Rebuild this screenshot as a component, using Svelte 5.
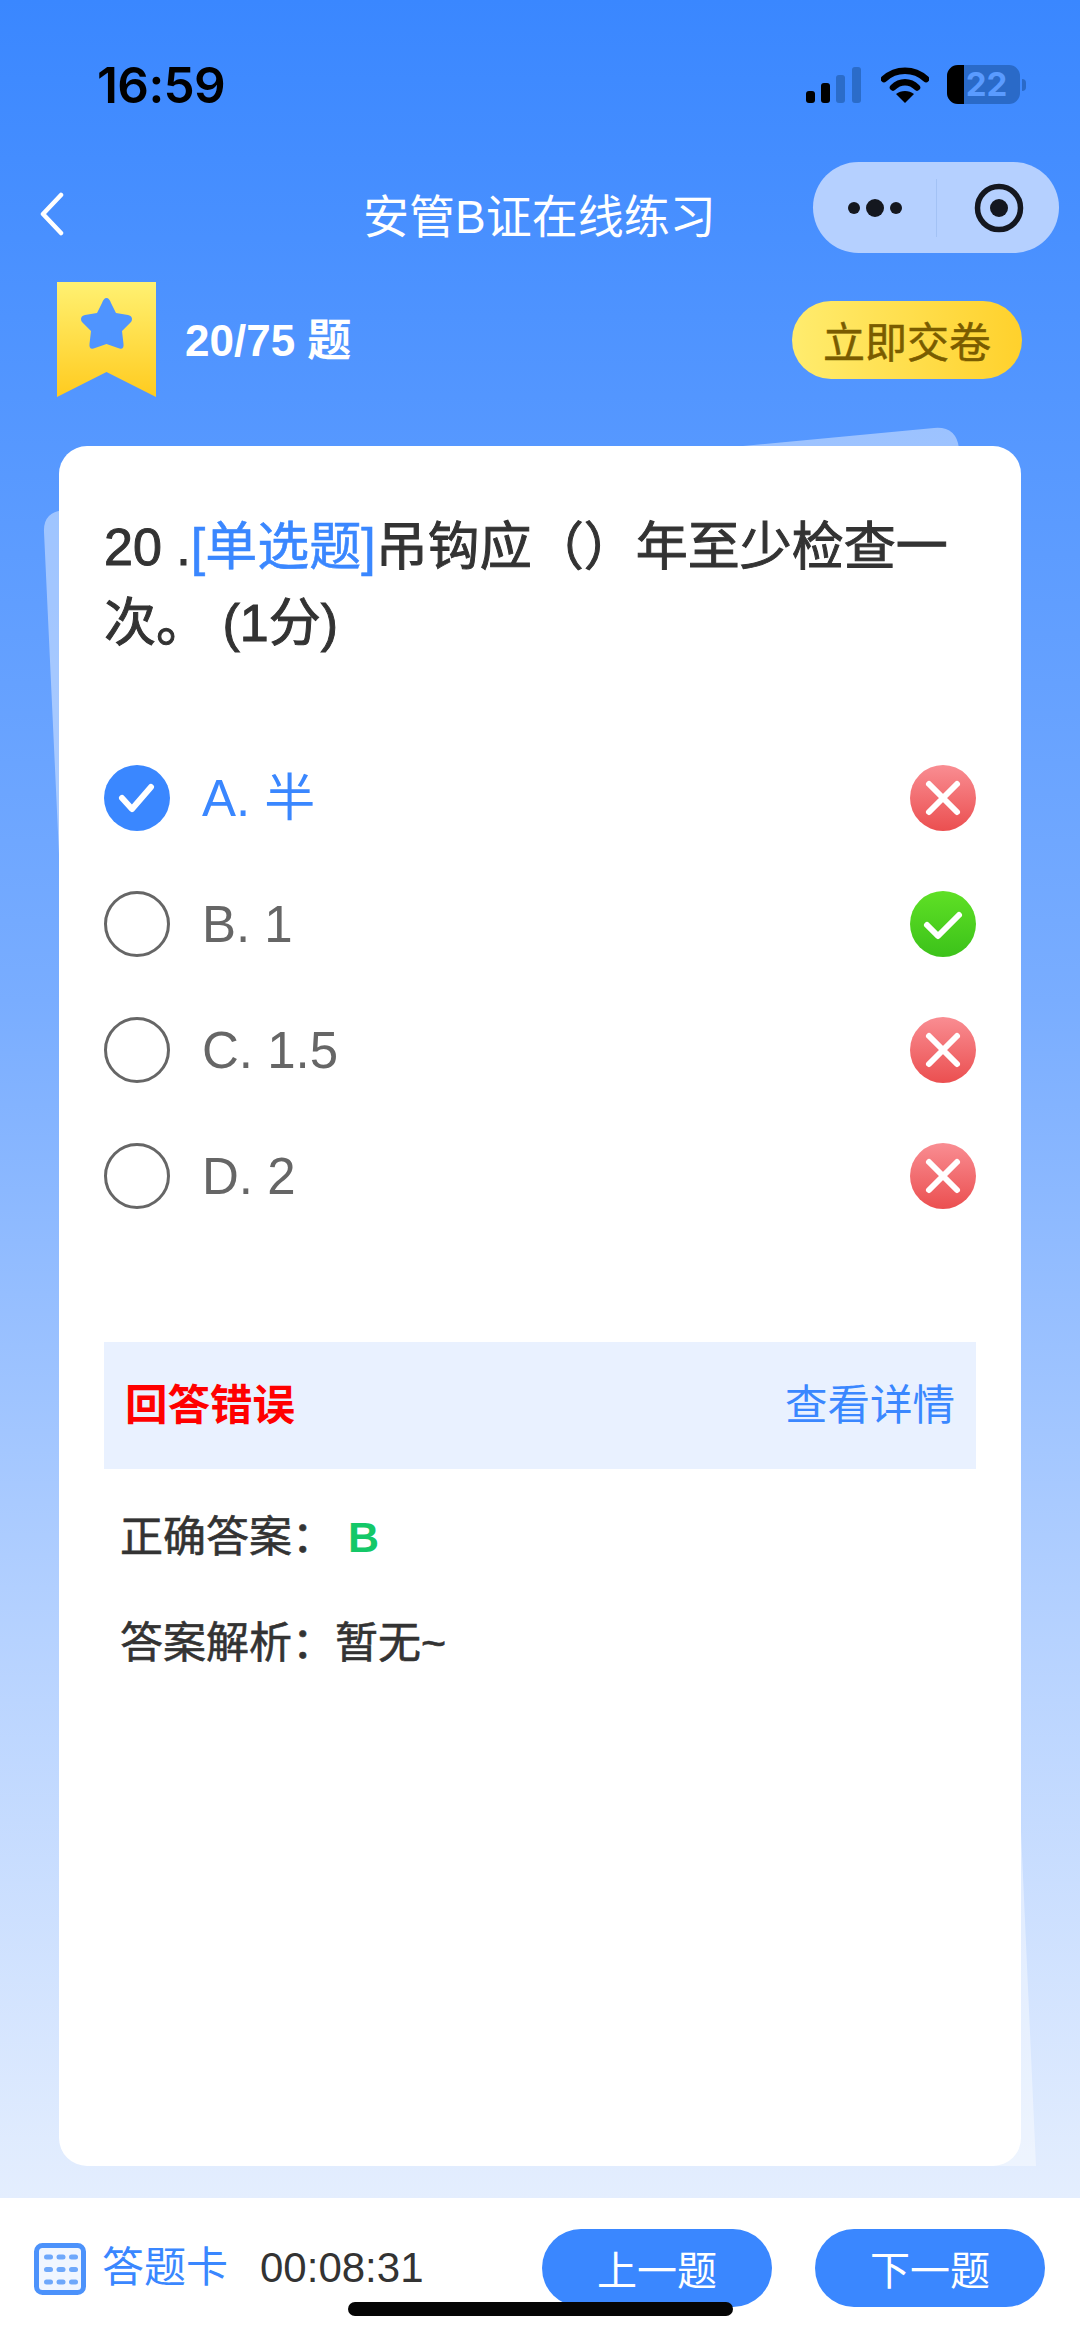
<script>
  const options = [
    { key: 'A', text: '半', picked: true, ok: false },
    { key: 'B', text: '1', picked: false, ok: true },
    { key: 'C', text: '1.5', picked: false, ok: false },
    { key: 'D', text: '2', picked: false, ok: false }
  ];
  const cells = [0, 1, 2];
</script>

<div class="page">
  <!-- tilted sheet peeking out behind the card -->
  <svg class="sheet" width="1080" height="2339" viewBox="0 0 1080 2339" aria-hidden="true">
    <path d="M64 510 L934 428 Q956 426 959 448 L1036 2166 L120 2166 L44 532 Q43 512 64 510 Z" fill="#fff" fill-opacity="0.42" />
  </svg>

  <header class="status">
    <span class="time">16:59</span>
    <div class="status-icons">
      <svg width="56" height="36" viewBox="0 0 56 36">
        <rect x="0" y="24" width="9" height="12" rx="3" fill="#000" />
        <rect x="15" y="16" width="9" height="20" rx="3" fill="#000" />
        <rect x="30" y="8" width="9" height="28" rx="3" fill="#2b6cc9" />
        <rect x="46" y="0" width="9" height="36" rx="3" fill="#2b6cc9" />
      </svg>
      <svg class="wifi" width="48" height="36" viewBox="0 0 48 36">
        <path d="M3 12 C15 1 33 1 45 12" fill="none" stroke="#000" stroke-width="6.5" stroke-linecap="round" />
        <path d="M12 20.5 C19 13.5 29 13.5 36 20.5" fill="none" stroke="#000" stroke-width="6.5" stroke-linecap="round" />
        <path d="M24 36 L15 27 C20 23 28 23 33 27 Z" fill="#000" />
      </svg>
      <div class="battery">
        <span class="level"></span>
        <span class="pct">22</span>
      </div>
      <span class="nub"></span>
    </div>
  </header>

  <nav class="nav">
    <svg class="back" width="26" height="44" viewBox="0 0 26 44">
      <path d="M22 3 L4 22 L22 41" fill="none" stroke="#fff" stroke-width="4.5" stroke-linecap="round" stroke-linejoin="round" />
    </svg>
    <h1>安管B证在线练习</h1>
    <div class="capsule">
      <svg width="60" height="24" viewBox="0 0 60 24">
        <circle cx="9" cy="12" r="6" fill="#14171f" />
        <circle cx="30" cy="12" r="9" fill="#14171f" />
        <circle cx="51" cy="12" r="6" fill="#14171f" />
      </svg>
      <span class="divider"></span>
      <svg width="52" height="52" viewBox="0 0 52 52">
        <circle cx="26" cy="26" r="21.5" fill="none" stroke="#14171f" stroke-width="5.5" />
        <circle cx="26" cy="26" r="9" fill="#14171f" />
      </svg>
    </div>
  </nav>

  <section class="progress">
    <svg width="99" height="115" viewBox="0 0 99 115">
      <defs>
        <linearGradient id="ribbon" x1="0" y1="0" x2="0" y2="1">
          <stop offset="0" stop-color="#fff172" />
          <stop offset="1" stop-color="#ffcb1f" />
        </linearGradient>
      </defs>
      <path d="M0 0 H99 V115 L49.5 90 L0 115 Z" fill="url(#ribbon)" />
      <path d="M49.5 16 C51.5 16 53 18 54 21 L59 31 L71 33 C75 34 76 37 74 40 L65 49 L66.5 62 C67 66 65 68 61 66 L49.5 62 L38 66 C34 68 32 66 32.5 62 L34 49 L25 40 C23 37 24 34 28 33 L40 31 L45 21 C46 18 47.5 16 49.5 16 Z" fill="#4f94ff" />
    </svg>
    <span class="count">20/75 题</span>
    <button class="submit">立即交卷</button>
  </section>

  <main class="main">
    <article class="card">
      <p class="question">20 .<span class="tag">[单选题]</span>吊钩应（）年至少检查一次。 (1分)</p>

      <ul class="options">
        {#each options as o}
          <li class="option" class:picked={o.picked}>
            {#if o.picked}
              <svg width="66" height="66" viewBox="0 0 66 66">
                <circle cx="33" cy="33" r="33" fill="#3a87ff" />
                <path d="M18 33 L28 44 L47 22" fill="none" stroke="#fff" stroke-width="6" stroke-linecap="round" stroke-linejoin="round" />
              </svg>
            {:else}
              <span class="radio"></span>
            {/if}
            <span class="label">{o.key}. {o.text}</span>
            {#if o.ok}
              <svg width="66" height="66" viewBox="0 0 66 66">
                <defs>
                  <linearGradient id="good" x1="0" y1="0" x2="0" y2="1">
                    <stop offset="0" stop-color="#5fe025" />
                    <stop offset="1" stop-color="#3cc21a" />
                  </linearGradient>
                </defs>
                <circle cx="33" cy="33" r="33" fill="url(#good)" />
                <path d="M17 34 L28 45 L49 24" fill="none" stroke="#fff" stroke-width="6" stroke-linecap="round" stroke-linejoin="round" />
              </svg>
            {:else}
              <svg width="66" height="66" viewBox="0 0 66 66">
                <defs>
                  <linearGradient id="bad" x1="0" y1="0" x2="0" y2="1">
                    <stop offset="0" stop-color="#f98d92" />
                    <stop offset="1" stop-color="#eb4f50" />
                  </linearGradient>
                </defs>
                <circle cx="33" cy="33" r="33" fill="url(#bad)" />
                <path d="M19 19 L47 47 M47 19 L19 47" fill="none" stroke="#fff" stroke-width="6" stroke-linecap="round" />
              </svg>
            {/if}
          </li>
        {/each}
      </ul>

      <div class="result">
        <strong>回答错误</strong>
        <span>查看详情</span>
      </div>
      <p class="answer">正确答案：<b>B</b></p>
      <p class="analysis">答案解析：暂无~</p>
    </article>
  </main>

  <footer class="footer">
    <svg class="grid-icon" width="52" height="52" viewBox="0 0 52 52">
      <rect x="2.5" y="2.5" width="47" height="47" rx="6" fill="#f0f6ff" stroke="#4c92fb" stroke-width="5" />
      {#each cells as r}
        {#each cells as c}
          <rect x={10 + c * 12.5} y={11.5 + r * 12.5} width="9" height="5" rx="2.5" fill="#6ea8fb" />
        {/each}
      {/each}
    </svg>
    <span class="sheet-link">答题卡</span>
    <span class="timer">00:08:31</span>
    <button class="step prev">上一题</button>
    <button class="step">下一题</button>
  </footer>

  <div class="home"></div>
</div>

<style>
  :global(body) { margin: 0; }
  .page {
    position: relative;
    width: 1080px;
    height: 2339px;
    overflow: hidden;
    display: flex;
    flex-direction: column;
    background: linear-gradient(180deg, #3a87ff 0, #79adff 1000px, #b6d2ff 1640px, #e4eefe 2198px);
    font-family: "Liberation Sans", "Noto Sans CJK SC", sans-serif;
    color: #333;
  }
  .sheet { position: absolute; left: 0; top: 0; }
  .status, .nav, .progress, .main, .footer { position: relative; }

  .status { height: 130px; display: flex; align-items: flex-start; flex: none; }
  .time { margin: 58px 0 0 97px; font: 600 49.5px/54px Inter, sans-serif; letter-spacing: -0.6px; color: #000; }
  .status-icons { margin: 65px 0 0 auto; padding-right: 54px; display: flex; align-items: center; height: 39px; }
  .wifi { margin-left: 19px; }
  .battery {
    position: relative;
    margin-left: 18px;
    width: 73px;
    height: 39px;
    border-radius: 11px;
    overflow: hidden;
    background: #2a6ac8;
    display: flex;
    align-items: center;
    justify-content: center;
  }
  .level { position: absolute; left: 0; top: 0; bottom: 0; width: 17px; background: #000; }
  .pct { position: relative; margin-left: 6px; font: 700 33px/39px Inter, sans-serif; color: #5a9bff; }
  .nub { width: 4px; height: 12px; margin-left: 2px; border-radius: 0 4px 4px 0; background: #2a6ac8; }

  .nav { height: 91px; margin-top: 32px; flex: none; display: flex; align-items: center; }
  .back { position: absolute; left: 39px; top: 30px; }
  .nav h1 { position: absolute; left: 363px; top: 28px; margin: 0; font-size: 46px; line-height: 54px; font-weight: 400; color: #fff; white-space: nowrap; }
  .capsule {
    margin-left: 813px;
    width: 246px;
    height: 91px;
    border-radius: 46px;
    background: #b5d0ff;
    display: flex;
    align-items: center;
    box-sizing: border-box;
    padding-left: 32px;
  }
  .divider { width: 1px; height: 58px; margin: 0 36px 0 31px; background: #a3c2f5; }

  .progress { height: 115px; margin-top: 29px; padding: 0 58px 0 57px; flex: none; display: flex; align-items: center; }
  .count { margin: 0 0 5px 29px; font-size: 44px; font-weight: 700; color: #fff; }
  .submit {
    margin-left: auto;
    width: 230px;
    height: 78px;
    border: 0;
    padding: 0;
    border-radius: 39px;
    background: linear-gradient(90deg, #ffec6e, #ffd12c);
    font: 400 42px "Liberation Sans", "Noto Sans CJK SC", sans-serif;
    color: #7a5c00;
    -webkit-text-stroke: 0.5px #7a5c00;
  }

  .main { flex: 1; min-height: 0; padding: 49px 59px 32px; box-sizing: border-box; display: flex; }
  .card {
    flex: 1;
    box-sizing: border-box;
    padding: 63px 45px 0;
    border-radius: 28px;
    background: #fff;
  }
  .question { margin: 0; font-size: 52px; line-height: 76px; font-weight: 400; -webkit-text-stroke: 1px #333; color: #333; }
  .tag { color: #3a87ff; -webkit-text-stroke: 0.6px #3a87ff; }

  .options { list-style: none; margin: 104px 0 0; padding: 0; display: flex; flex-direction: column; gap: 60px; }
  .option { display: flex; align-items: center; height: 66px; }
  .radio { width: 66px; height: 66px; box-sizing: border-box; border: 3px solid #666; border-radius: 50%; }
  .label { flex: 1; margin: 2px 0 0 32px; font-size: 51px; line-height: 66px; color: #666; }
  .picked .label { color: #3a87ff; }

  .result {
    margin-top: 133px;
    height: 127px;
    padding: 0 21px 8px;
    box-sizing: border-box;
    display: flex;
    align-items: center;
    justify-content: space-between;
    background: #e9f1ff;
    font-size: 42.5px;
  }
  .result strong { color: #f00; font-weight: 700; }
  .result span { color: #3a87ff; }

  .answer, .analysis { margin: 0 0 0 16px; font-size: 43px; line-height: 50px; -webkit-text-stroke: 0.6px #333; }
  .answer { margin-top: 43px; }
  .answer b { margin-left: 13px; color: #14c868; -webkit-text-stroke: 0; font-size: 43px; }
  .analysis { margin-top: 56px; }

  .footer { height: 141px; flex: none; background: #fff; display: flex; align-items: flex-start; padding-right: 35px; box-sizing: border-box; }
  .grid-icon { position: absolute; left: 34px; top: 45px; }
  .sheet-link { margin: 44px 0 0 102px; font-size: 42px; line-height: 52px; color: #3a87ff; white-space: nowrap; }
  .timer { margin: 44px 0 0 32px; font-size: 42px; line-height: 52px; color: #333; }
  .step {
    width: 230px;
    height: 78px;
    margin-top: 31px;
    margin-left: 43px;
    border: 0;
    padding: 0;
    border-radius: 39px;
    background: #3a87ff;
    color: #fff;
    font: 400 40px "Liberation Sans", "Noto Sans CJK SC", sans-serif;
  }
  .prev { margin-left: auto; }

  .home { position: absolute; left: 348px; top: 2302px; width: 385px; height: 14px; border-radius: 7px; background: #050505; }
</style>
